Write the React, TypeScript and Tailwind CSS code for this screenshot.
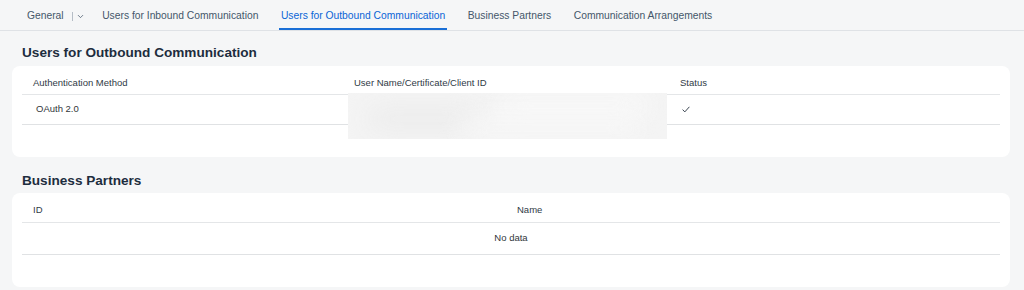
import { ChevronDown } from 'lucide-react';

const tabs = [
  { label: 'Users for Inbound Communication', active: false },
  { label: 'Users for Outbound Communication', active: true },
  { label: 'Business Partners', active: false },
  { label: 'Communication Arrangements', active: false },
];

function Check() {
  return (
    <svg width="8" height="7" viewBox="0 0 8 7" fill="none">
      <path d="M0.6 3.6 L2.8 5.9 L7.4 0.8" stroke="#3a4450" strokeWidth="1" />
    </svg>
  );
}

export default function App() {
  return (
    <div className="w-[1024px] h-[290px] overflow-hidden bg-[#f5f6f7] font-['Liberation_Sans',Arial,sans-serif] text-[#32363a]">
      {/* Tab bar */}
      <div className="flex items-stretch h-[31px] border-b border-[#dfe2e6] pl-[25px] gap-[18.5px]">
        <div className="flex items-center h-[30px] pt-[4px] px-[2px] mr-[-5px] border-b-2 border-transparent text-[10.3px] text-[#44566a]">
          <span>General</span>
          <span className="ml-[8px] w-px h-[9px] bg-[#b5bdc6]" />
          <ChevronDown size={9} strokeWidth={2} className="ml-[3px] text-[#44566a]" />
        </div>
        {tabs.map(t => (
          <div
            key={t.label}
            className={
              t.active
                ? 'flex items-center h-[30px] pt-[4px] px-[2px] border-b-2 border-[#1a6fd6] text-[10.3px] text-[#0a64d6]'
                : 'flex items-center h-[30px] pt-[4px] px-[2px] border-b-2 border-transparent text-[10.3px] text-[#44566a]'
            }
          >
            {t.label}
          </div>
        ))}
      </div>

      <div className="px-[12px] pr-[14px]">
        {/* Outbound users */}
        <h2 className="pl-[10px] pt-[14px] pb-[5px] text-[13.6px] leading-[16px] font-bold text-[#1d2d3e]">
          Users for Outbound Communication
        </h2>
        <div className="relative bg-white rounded-lg px-[10px] pt-[6px] pb-[32px]">
          <div className="grid grid-cols-[321px_326px_1fr] h-[23px] border-b border-[#e4e6e8] items-center text-[9.5px] text-[#2f3a46]">
            <div className="pl-[11px]">Authentication Method</div>
            <div className="pl-[11px]">User Name/Certificate/Client ID</div>
            <div className="pl-[11px]">Status</div>
          </div>
          <div className="grid grid-cols-[321px_326px_1fr] h-[30px] border-b border-[#e0e2e4] items-center text-[9.5px]">
            <div className="pl-[14px]">OAuth 2.0</div>
            <div />
            <div className="pl-[13px]"><Check /></div>
          </div>
          {/* redacted area */}
          <div className="absolute left-[336px] top-[27px] w-[319px] h-[46px] bg-[#f4f4f4] overflow-hidden">
            <div className="absolute left-[20px] top-[14px] w-[110px] h-[24px] rounded-full bg-[#ececec] blur-md" />
            <div className="absolute left-[150px] top-[4px] w-[150px] h-[18px] rounded-full bg-[#fafafa] blur-md" />
            <div className="absolute left-[110px] top-[28px] w-[180px] h-[14px] rounded-full bg-[#f9f9f9] blur-md" />
          </div>
        </div>

        {/* Business partners */}
        <h2 className="pl-[10px] pt-[16px] pb-[4px] text-[13.6px] leading-[16px] font-bold text-[#1d2d3e]">
          Business Partners
        </h2>
        <div className="bg-white rounded-lg px-[10px] pt-[6px] pb-[32px]">
          <div className="grid grid-cols-[484px_1fr] h-[24px] border-b border-[#e4e6e8] items-center text-[9.5px] text-[#2f3a46]">
            <div className="pl-[11px]">ID</div>
            <div className="pl-[11px]">Name</div>
          </div>
          <div className="flex h-[32px] border-b border-[#e0e2e4] items-center justify-center text-[9.5px]">
            No data
          </div>
        </div>
      </div>
    </div>
  );
}
